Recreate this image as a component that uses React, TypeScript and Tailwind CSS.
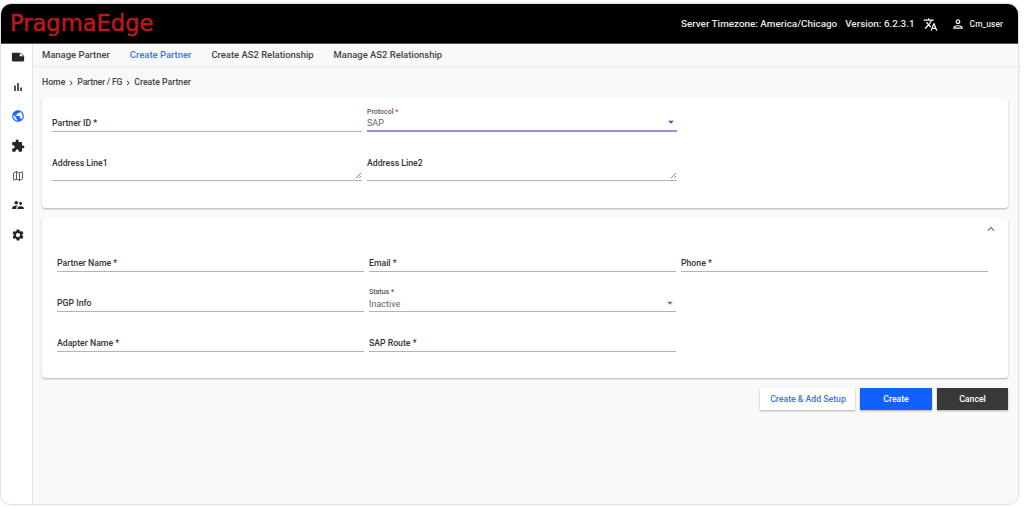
import { MdBarChart, MdPublic, MdExtension, MdSupervisorAccount, MdSettings, MdTranslate, MdOutlinePerson, MdArrowDropDown, MdExpandLess, MdChevronRight } from "react-icons/md";
import { Map as MapIcon } from "lucide-react";

function Folder() {
  return (
    <svg viewBox="0 0 24 24" className="w-[14px] h-[14px]" fill="#262626">
      <path d="M1.5 6.5c0-1 .8-1.8 1.8-1.8H16l6.5 5v8c0 1-.8 1.8-1.8 1.8H3.3c-1 0-1.8-.8-1.8-1.8z" />
      <path d="M15 5v5.5h7z" fill="#f2f2f2" />
    </svg>
  );
}

function Resize() {
  return (
    <svg viewBox="0 0 8 8" className="absolute right-0 bottom-[1px] w-[7px] h-[7px]" stroke="#555" strokeWidth="0.8">
      <path d="M1 7 7 1M4.5 7 7 4.5" />
    </svg>
  );
}

function Field({ label, area }: { label: string; area?: boolean }) {
  return (
    <div className={`relative flex border-b border-[#b4b4b4] ${area ? "h-[28px] items-start pt-[6px]" : "h-[18px] items-center pt-[1px]"}`}>
      <span className="text-[8.7px] font-medium text-[#333] leading-none">{label}</span>
      {area && <Resize />}
    </div>
  );
}

function SelectField({ label, value, active, req }: { label: string; value: string; active?: boolean; req?: string }) {
  return (
    <div className={`relative h-[28px] flex flex-col justify-end ${active ? "border-b-2 border-[#8b96d6]" : "border-b border-[#b4b4b4]"}`}>
      <span className="text-[7px] font-medium text-[#555] leading-[9px]">
        {label} <span className={req ?? "text-[#555]"}>*</span>
      </span>
      <span className={`text-[9px] text-[#666] ${active ? "leading-[13px]" : "leading-[14px]"}`}>{value}</span>
      <MdArrowDropDown className={`absolute right-[-1px] bottom-[1px] w-[14px] h-[14px] ${active ? "text-[#3f51b5]" : "text-[#777]"}`} />
    </div>
  );
}

function Icon({ children }: { children: React.ReactNode }) {
  return <div className="w-[14px] h-[14px] flex items-center justify-center">{children}</div>;
}

export default function App() {
  return (
    <div className="w-[1024px] h-[507px] bg-white overflow-hidden pt-[4px] pl-[1px] font-['Roboto',sans-serif]">
      <div className="w-[1017px] h-[500px] rounded-[10px] overflow-hidden flex flex-col shadow-[0_0_3px_rgba(0,0,0,0.3)]">
        <header className="h-[40px] shrink-0 bg-black flex items-center pl-[9px] pr-[15px] border-b border-[#555]">
          <span className="font-['DejaVu_Sans',sans-serif] text-[22.6px] leading-none text-[#b5191c] [-webkit-text-stroke:0.6px_#b5191c]">PragmaEdge</span>
          <div className="ml-auto flex items-center text-[#e8e8e8] text-[9.9px] font-medium pt-[1px]">
            <span>Server Timezone: America/Chicago</span>
            <span className="ml-[8px]">Version: 6.2.3.1</span>
            <MdTranslate className="ml-[8px] w-[15px] h-[15px] text-white" />
            <MdOutlinePerson className="ml-[13px] w-[14px] h-[14px] text-white" />
            <span className="ml-[5px] text-[8.5px]">Cm_user</span>
          </div>
        </header>
        <div className="flex-1 flex min-h-0">
          <aside className="w-[32px] shrink-0 bg-white border-r border-[#e4e4e4] flex flex-col items-center pt-[6px] pl-[2px] gap-[15.67px] text-[#262626]">
            <Icon><Folder /></Icon>
            <Icon><MdBarChart className="w-[12px] h-[12px] text-[#555]" /></Icon>
            <Icon><MdPublic className="w-[14px] h-[14px] text-[#1a66ff]" /></Icon>
            <Icon><MdExtension className="w-[14px] h-[14px]" /></Icon>
            <Icon><MapIcon className="w-[12px] h-[12px] text-[#444]" strokeWidth={1.8} /></Icon>
            <Icon><MdSupervisorAccount className="w-[14px] h-[14px]" /></Icon>
            <Icon><MdSettings className="w-[14px] h-[14px]" /></Icon>
          </aside>
          <main className="flex-1 bg-[#f9f9f9] min-w-0">
            <nav className="h-[23px] border-b border-[#ececec] flex items-center pl-[9px] gap-[20px] text-[9.45px] font-medium text-[#444]">
              <span>Manage Partner</span>
              <span className="text-[#3b6fff]">Create Partner</span>
              <span>Create AS2 Relationship</span>
              <span>Manage AS2 Relationship</span>
            </nav>
            <div className="h-[31px] flex items-center pl-[9px] text-[8.7px] font-medium text-[#444]">
              <span>Home</span>
              <MdChevronRight className="w-[10px] h-[10px] mx-[1px]" />
              <span className="tracking-[-0.2px]">Partner / FG</span>
              <MdChevronRight className="w-[10px] h-[10px] mx-[1px]" />
              <span>Create Partner</span>
            </div>
            <div className="pl-[9px] pr-[10px]">
              <section className="h-[110px] bg-white rounded-[3px] shadow-[0_1px_2px_rgba(0,0,0,0.3)] pl-[10px] pt-[16px]">
                <div className="grid grid-cols-[310px_310px] gap-x-[5px] gap-y-[21px]">
                  <Field label="Partner ID *" />
                  <div className="-mt-[10px]"><SelectField label="Protocol" value="SAP" active req="text-[#e53935]" /></div>
                  <Field label="Address Line1" area />
                  <Field label="Address Line2" area />
                </div>
              </section>
              <section className="relative h-[160px] mt-[10px] bg-white rounded-[3px] shadow-[0_1px_2px_rgba(0,0,0,0.3)] pl-[15px] pt-[36px]">
                <MdExpandLess className="absolute right-[10px] top-[4px] w-[14px] h-[14px] text-[#666]" />
                <div className="grid grid-cols-[307px_307px_307px] gap-x-[5px] gap-y-[12px]">
                  <Field label="Partner Name *" />
                  <Field label="Email *" />
                  <Field label="Phone *" />
                  <div className="pt-[10px]"><Field label="PGP Info" /></div>
                  <SelectField label="Status" value="Inactive" />
                  <div />
                  <div className="pt-[10px]"><Field label="Adapter Name *" /></div>
                  <div className="pt-[10px]"><Field label="SAP Route *" /></div>
                </div>
              </section>
              <div className="mt-[10px] flex justify-end gap-[5px] text-[8.7px] font-medium">
                <button className="w-[95px] h-[22px] pt-[1px] pl-[1px] bg-white text-[#3b6fff] shadow-[0_1px_2px_rgba(0,0,0,0.3)]">Create &amp; Add Setup</button>
                <button className="w-[72px] h-[22px] pt-[1px] bg-[#0f62fe] text-white shadow-[0_1px_2px_rgba(0,0,0,0.3)]">Create</button>
                <button className="w-[71px] h-[22px] pt-[1px] bg-[#393939] text-white shadow-[0_1px_2px_rgba(0,0,0,0.3)]">Cancel</button>
              </div>
            </div>
          </main>
        </div>
      </div>
    </div>
  );
}
